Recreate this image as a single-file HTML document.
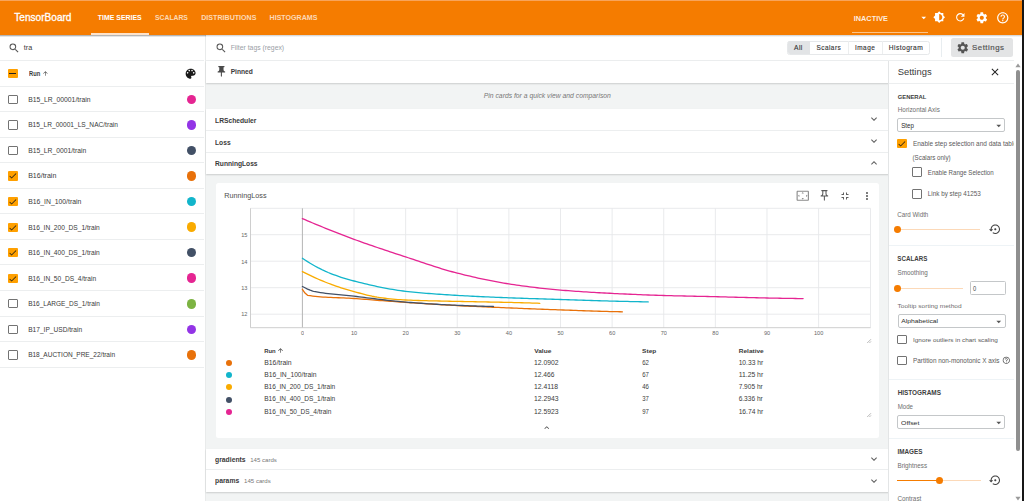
<!DOCTYPE html>
<html><head><meta charset="utf-8"><style>
*{box-sizing:border-box;margin:0;padding:0}
html,body{width:1024px;height:501px;overflow:hidden}
body{position:relative;font-family:"Liberation Sans",sans-serif;background:#fff}
.a{position:absolute}
.t{position:absolute;white-space:nowrap;line-height:12px;height:12px}
</style></head><body>
<div class="a" style="left:0.00px;top:0.00px;width:1024.00px;height:501.00px;background:#fff"></div>
<div class="a" style="left:205.50px;top:35.00px;width:683.10px;height:466.00px;background:#f2f4f4"></div>
<div class="a" style="left:204.50px;top:35.00px;width:1.50px;height:466.00px;background:#e9ebeb"></div>
<div class="a" style="left:0.00px;top:0.00px;width:1024.00px;height:34.60px;background:#f57c00"></div>
<div class="a" style="left:0.00px;top:0.00px;width:1024.00px;height:0.80px;background:#f8a45a"></div>
<div class="a" style="left:0.00px;top:34.60px;width:1024.00px;height:2.20px;background:linear-gradient(rgba(0,0,0,.22),rgba(0,0,0,0))"></div>
<div class="t" style="left:14.25px;top:12.00px;font-size:10.11px;color:#fff;font-weight:normal;transform:scaleY(1.050);transform-origin:0 9.00px;-webkit-text-stroke:0.3px #fff">TensorBoard</div>
<div class="t" style="left:97.75px;top:12.00px;font-size:6.95px;color:#fff;font-weight:bold;transform:scaleY(1.088);transform-origin:0 8.00px">TIME SERIES</div>
<div class="t" style="left:155.05px;top:12.00px;font-size:6.81px;color:rgba(255,255,255,.72);font-weight:bold;transform:scaleY(1.110);transform-origin:0 8.00px">SCALARS</div>
<div class="t" style="left:201.25px;top:12.00px;font-size:7.10px;color:rgba(255,255,255,.72);font-weight:bold;transform:scaleY(1.065);transform-origin:0 8.00px">DISTRIBUTIONS</div>
<div class="t" style="left:269.55px;top:12.00px;font-size:7.09px;color:rgba(255,255,255,.72);font-weight:bold;transform:scaleY(1.067);transform-origin:0 8.00px">HISTOGRAMS</div>
<div class="a" style="left:91.00px;top:33.00px;width:58.00px;height:1.80px;background:#fde3cc"></div>
<div class="t" style="left:853.75px;top:13.00px;font-size:7.33px;color:rgba(255,255,255,.88);font-weight:bold;transform:scaleY(1.051);transform-origin:0 8.00px">INACTIVE</div>
<div class="a" style="left:851.80px;top:31.80px;width:76.20px;height:1.20px;background:rgba(255,255,255,.55)"></div>
<svg class="a" style="left:917.75px;top:11.85px;width:11.50px;height:11.50px" viewBox="0 0 24 24"><path fill="#fff" d="M7 10l5 5 5-5z"/></svg>
<svg class="a" style="left:932.80px;top:11.25px;width:12.40px;height:12.40px" viewBox="0 0 24 24"><path fill="#fff" d="M20 15.31L23.31 12 20 8.69V4h-4.69L12 .69 8.69 4H4v4.69L.69 12 4 15.31V20h4.690L12 23.31 15.31 20H20v-4.69zM12 18V6c3.31 0 6 2.69 6 6s-2.69 6-6 6z"/></svg>
<svg class="a" style="left:954.00px;top:11.40px;width:12.60px;height:12.60px" viewBox="0 0 24 24"><path fill="#fff" d="M17.65 6.35A7.958 7.958 0 0 0 12 4c-4.42 0-7.99 3.58-7.99 8s3.57 8 7.99 8c3.73 0 6.84-2.55 7.73-6h-2.08A5.990 5.990 0 0 1 12 18c-3.31 0-6-2.69-6-6s2.69-6 6-6c1.66 0 3.140.69 4.22 1.78L13 11h7V4l-2.35 2.35z"/></svg>
<svg class="a" style="left:974.70px;top:10.65px;width:13.60px;height:13.60px" viewBox="0 0 24 24"><path fill="#fff" d="M19.14 12.94c.04-.3.06-.61.06-.94 0-.32-.02-.64-.07-.94l2.03-1.58a.49.49 0 0 0 .12-.61l-1.92-3.32a.488.488 0 0 0-.59-.22l-2.39.96c-.5-.38-1.03-.7-1.62-.94l-.36-2.54a.484.484 0 0 0-.48-.41h-3.84c-.24 0-.43.17-.47.41l-.36 2.54c-.59.24-1.13.57-1.62.94l-2.39-.96c-.22-.08-.47 0-.59.22L2.74 8.87c-.12.21-.08.47.12.61l2.030 1.58c-.05.3-.09.63-.09.94s.02.64.07.94l-2.03 1.58a.49.49 0 0 0-.12.61l1.92 3.32c.12.22.37.29.59.22l2.39-.96c.5.38 1.030.7 1.62.94l.36 2.54c.05.24.24.41.48.41h3.84c.24 0 .44-.17.47-.41l.36-2.54c.59-.24 1.13-.56 1.62-.94l2.39.96c.22.08.47 0 .59-.22l1.92-3.32c.12-.22.07-.47-.12-.61l-2.01-1.58zM12 15.6c-1.98 0-3.6-1.62-3.6-3.6s1.62-3.6 3.6-3.6 3.6 1.62 3.6 3.6-1.62 3.6-3.6 3.6z"/></svg>
<svg class="a" style="left:995.85px;top:10.80px;width:13.50px;height:13.50px" viewBox="0 0 24 24"><path fill="#fff" d="M11 18h2v-2h-2v2zm1-16C6.48 2 2 6.48 2 12s4.48 10 10 10 10-4.48 10-10S17.52 2 12 2zm0 18c-4.41 0-8-3.59-8-8s3.59-8 8-8 8 3.59 8 8-3.59 8-8 8zm0-14c-2.21 0-4 1.79-4 4h2c0-1.1.9-2 2-2s2 .9 2 2c0 2-3 1.75-3 5h2c0-2.25 3-2.5 3-5 0-2.21-1.79-4-4-4z"/></svg>
<svg class="a" style="left:8.35px;top:41.55px;width:12.30px;height:12.30px" viewBox="0 0 24 24"><path fill="#555" d="M15.5 14h-.79l-.28-.27A6.471 6.471 0 0 0 16 9.5 6.5 6.5 0 1 0 9.5 16c1.61 0 3.09-.59 4.23-1.57l.27.28v.79l5 4.99L20.49 19l-4.99-5zm-6 0C7.01 14 5 11.99 5 9.5S7.01 5 9.5 5 14 7.01 14 9.5 11.99 14 9.5 14z"/></svg>
<div class="t" style="left:23.85px;top:42.00px;font-size:7.20px;color:#3a3a3a;font-weight:normal">tra</div>
<div class="a" style="left:0.00px;top:59.90px;width:204.20px;height:1.00px;background:#eceeef"></div>
<div class="a" style="left:8.00px;top:68.70px;width:9.50px;height:9.30px;background:#f9a825;background:#ffa000;border-radius:1px"></div>
<div class="a" style="left:9.10px;top:72.70px;width:7.40px;height:1.30px;background:#212121"></div>
<div class="t" style="left:29.05px;top:68.00px;font-size:5.76px;color:#3a3a3a;font-weight:bold;transform:scaleY(1.186);transform-origin:0 8.00px">Run</div>
<svg class="a" style="left:41.60px;top:70.10px;width:6.80px;height:6.80px" viewBox="0 0 24 24"><path fill="#3a3a3a" d="M4 12l1.41 1.41L11 7.83V20h2V7.83l5.58 5.59L20 12l-8-8-8 8z"/></svg>
<svg class="a" style="left:184.05px;top:66.55px;width:13.30px;height:13.30px" viewBox="0 0 24 24"><path fill="#1a1a1a" d="M12 3c-4.97 0-9 4.03-9 9s4.03 9 9 9c.83 0 1.5-.67 1.5-1.5 0-.39-.15-.74-.39-1.01-.23-.26-.38-.61-.38-.99 0-.83.67-1.5 1.5-1.5H16c2.76 0 5-2.24 5-5 0-4.42-4.03-8-9-8zm-5.5 9c-.83 0-1.5-.67-1.5-1.5S5.67 9 6.5 9 8 9.67 8 10.5 7.33 12 6.5 12zm3-4C8.67 8 8 7.33 8 6.5S8.67 5 9.5 5s1.5.67 1.5 1.5S10.33 8 9.5 8zm5 0c-.83 0-1.5-.67-1.5-1.5S13.67 5 14.5 5s1.5.67 1.5 1.5S15.33 8 14.5 8zm3 4c-.83 0-1.5-.67-1.5-1.5S16.67 9 17.5 9s1.5.67 1.5 1.5-.67 1.5-1.5 1.5z"/></svg>
<div class="a" style="left:0.00px;top:86.00px;width:204.40px;height:1.00px;background:#eceeef"></div>
<div class="a" style="left:8.00px;top:94.75px;width:9.50px;height:9.30px;border:1.15px solid #737373;border-radius:1px"></div>
<div class="t" style="left:28.15px;top:94.00px;font-size:6.80px;color:#3a3a3a;font-weight:normal;transform:scaleY(1.026);transform-origin:0 8.00px">B15_LR_00001/train</div>
<div class="a" style="left:186.70px;top:94.60px;width:9.60px;height:9.60px;background:#e52592;border-radius:50%"></div>
<div class="a" style="left:0.00px;top:111.00px;width:204.40px;height:1.00px;background:#eceeef"></div>
<div class="a" style="left:8.00px;top:120.30px;width:9.50px;height:9.30px;border:1.15px solid #737373;border-radius:1px"></div>
<div class="t" style="left:28.15px;top:119.00px;font-size:6.60px;color:#3a3a3a;font-weight:normal;transform:scaleY(1.057);transform-origin:0 8.00px">B15_LR_00001_LS_NAC/train</div>
<div class="a" style="left:186.70px;top:120.15px;width:9.60px;height:9.60px;background:#9334e6;border-radius:50%"></div>
<div class="a" style="left:0.00px;top:136.58px;width:204.40px;height:1.00px;background:#eceeef"></div>
<div class="a" style="left:8.00px;top:145.85px;width:9.50px;height:9.30px;border:1.15px solid #737373;border-radius:1px"></div>
<div class="t" style="left:28.15px;top:145.00px;font-size:6.74px;color:#3a3a3a;font-weight:normal;transform:scaleY(1.035);transform-origin:0 8.00px">B15_LR_0001/train</div>
<div class="a" style="left:186.70px;top:145.70px;width:9.60px;height:9.60px;background:#425066;border-radius:50%"></div>
<div class="a" style="left:0.00px;top:162.16px;width:204.40px;height:1.00px;background:#eceeef"></div>
<div class="a" style="left:8.00px;top:171.40px;width:9.50px;height:9.30px;background:#ffa000;border-radius:1px"></div>
<svg class="a" style="left:7.95px;top:171.45px;width:9.60px;height:9.60px" viewBox="0 0 24 24"><path fill="#1a1a1a" d="M9 16.17L4.830 12l-1.42 1.41L9 19 21 7l-1.41-1.41z"/></svg>
<div class="t" style="left:28.15px;top:170.00px;font-size:7.05px;color:#3a3a3a;font-weight:normal">B16/train</div>
<div class="a" style="left:186.70px;top:171.25px;width:9.60px;height:9.60px;background:#e8710a;border-radius:50%"></div>
<div class="a" style="left:0.00px;top:187.74px;width:204.40px;height:1.00px;background:#eceeef"></div>
<div class="a" style="left:8.00px;top:196.95px;width:9.50px;height:9.30px;background:#ffa000;border-radius:1px"></div>
<svg class="a" style="left:7.95px;top:197.00px;width:9.60px;height:9.60px" viewBox="0 0 24 24"><path fill="#1a1a1a" d="M9 16.17L4.830 12l-1.42 1.41L9 19 21 7l-1.41-1.41z"/></svg>
<div class="t" style="left:28.15px;top:196.00px;font-size:6.84px;color:#3a3a3a;font-weight:normal;transform:scaleY(1.021);transform-origin:0 8.00px">B16_IN_100/train</div>
<div class="a" style="left:186.70px;top:196.80px;width:9.60px;height:9.60px;background:#12b5cb;border-radius:50%"></div>
<div class="a" style="left:0.00px;top:213.32px;width:204.40px;height:1.00px;background:#eceeef"></div>
<div class="a" style="left:8.00px;top:222.50px;width:9.50px;height:9.30px;background:#ffa000;border-radius:1px"></div>
<svg class="a" style="left:7.95px;top:222.55px;width:9.60px;height:9.60px" viewBox="0 0 24 24"><path fill="#1a1a1a" d="M9 16.17L4.830 12l-1.42 1.41L9 19 21 7l-1.41-1.41z"/></svg>
<div class="t" style="left:28.15px;top:222.00px;font-size:6.62px;color:#3a3a3a;font-weight:normal;transform:scaleY(1.053);transform-origin:0 8.00px">B16_IN_200_DS_1/train</div>
<div class="a" style="left:186.70px;top:222.35px;width:9.60px;height:9.60px;background:#f9ab00;border-radius:50%"></div>
<div class="a" style="left:0.00px;top:238.90px;width:204.40px;height:1.00px;background:#eceeef"></div>
<div class="a" style="left:8.00px;top:248.05px;width:9.50px;height:9.30px;background:#ffa000;border-radius:1px"></div>
<svg class="a" style="left:7.95px;top:248.10px;width:9.60px;height:9.60px" viewBox="0 0 24 24"><path fill="#1a1a1a" d="M9 16.17L4.830 12l-1.42 1.41L9 19 21 7l-1.41-1.41z"/></svg>
<div class="t" style="left:28.15px;top:247.00px;font-size:6.62px;color:#3a3a3a;font-weight:normal;transform:scaleY(1.053);transform-origin:0 8.00px">B16_IN_400_DS_1/train</div>
<div class="a" style="left:186.70px;top:247.90px;width:9.60px;height:9.60px;background:#425066;border-radius:50%"></div>
<div class="a" style="left:0.00px;top:264.48px;width:204.40px;height:1.00px;background:#eceeef"></div>
<div class="a" style="left:8.00px;top:273.60px;width:9.50px;height:9.30px;background:#ffa000;border-radius:1px"></div>
<svg class="a" style="left:7.95px;top:273.65px;width:9.60px;height:9.60px" viewBox="0 0 24 24"><path fill="#1a1a1a" d="M9 16.17L4.830 12l-1.42 1.41L9 19 21 7l-1.41-1.41z"/></svg>
<div class="t" style="left:28.15px;top:273.00px;font-size:6.62px;color:#3a3a3a;font-weight:normal;transform:scaleY(1.054);transform-origin:0 8.00px">B16_IN_50_DS_4/train</div>
<div class="a" style="left:186.70px;top:273.45px;width:9.60px;height:9.60px;background:#e52592;border-radius:50%"></div>
<div class="a" style="left:0.00px;top:290.06px;width:204.40px;height:1.00px;background:#eceeef"></div>
<div class="a" style="left:8.00px;top:299.15px;width:9.50px;height:9.30px;border:1.15px solid #737373;border-radius:1px"></div>
<div class="t" style="left:28.15px;top:298.00px;font-size:6.52px;color:#3a3a3a;font-weight:normal;transform:scaleY(1.069);transform-origin:0 8.00px">B16_LARGE_DS_1/train</div>
<div class="a" style="left:186.70px;top:299.00px;width:9.60px;height:9.60px;background:#7cb342;border-radius:50%"></div>
<div class="a" style="left:0.00px;top:315.64px;width:204.40px;height:1.00px;background:#eceeef"></div>
<div class="a" style="left:8.00px;top:324.70px;width:9.50px;height:9.30px;border:1.15px solid #737373;border-radius:1px"></div>
<div class="t" style="left:28.15px;top:324.00px;font-size:6.61px;color:#3a3a3a;font-weight:normal;transform:scaleY(1.056);transform-origin:0 8.00px">B17_IP_USD/train</div>
<div class="a" style="left:186.70px;top:324.55px;width:9.60px;height:9.60px;background:#9334e6;border-radius:50%"></div>
<div class="a" style="left:0.00px;top:341.22px;width:204.40px;height:1.00px;background:#eceeef"></div>
<div class="a" style="left:8.00px;top:350.25px;width:9.50px;height:9.30px;border:1.15px solid #737373;border-radius:1px"></div>
<div class="t" style="left:28.15px;top:349.00px;font-size:6.53px;color:#3a3a3a;font-weight:normal;transform:scaleY(1.068);transform-origin:0 8.00px">B18_AUCTION_PRE_22/train</div>
<div class="a" style="left:186.70px;top:350.10px;width:9.60px;height:9.60px;background:#e8710a;border-radius:50%"></div>
<div class="a" style="left:0.00px;top:366.80px;width:204.40px;height:1.00px;background:#eceeef"></div>
<div class="a" style="left:205.80px;top:35.00px;width:816.20px;height:25.00px;background:#fff"></div>
<div class="a" style="left:205.80px;top:59.60px;width:808.40px;height:1.00px;background:#eceeef"></div>
<svg class="a" style="left:214.85px;top:41.65px;width:12.30px;height:12.30px" viewBox="0 0 24 24"><path fill="#555" d="M15.5 14h-.79l-.28-.27A6.471 6.471 0 0 0 16 9.5 6.5 6.5 0 1 0 9.5 16c1.61 0 3.09-.59 4.23-1.57l.27.28v.79l5 4.99L20.49 19l-4.99-5zm-6 0C7.01 14 5 11.99 5 9.5S7.01 5 9.5 5 14 7.01 14 9.5 11.99 14 9.5 14z"/></svg>
<div class="t" style="left:230.65px;top:42.00px;font-size:6.83px;color:#9aa0a6;font-weight:normal;transform:scaleY(0.958);transform-origin:0 8.00px">Filter tags (regex)</div>
<div class="a" style="left:787.20px;top:40.70px;width:142.90px;height:13.90px;border:0.8px solid #e6e8ea;border-radius:2.5px;background:#fff"></div>
<div class="a" style="left:787.60px;top:41.10px;width:22.50px;height:13.10px;background:#e2e4e6;border-radius:2px 0 0 2px"></div>
<div class="a" style="left:848.10px;top:41.10px;width:0.80px;height:13.10px;background:#eceeef"></div>
<div class="a" style="left:882.10px;top:41.10px;width:0.80px;height:13.10px;background:#eceeef"></div>
<div class="t" style="left:794.05px;top:42.00px;font-size:6.66px;color:#333;font-weight:normal;letter-spacing:0.45px;transform:scaleY(1.026);transform-origin:0 8.00px;-webkit-text-stroke:0.12px #333">All</div>
<div class="t" style="left:816.55px;top:42.00px;font-size:6.45px;color:#333;font-weight:normal;letter-spacing:0.45px;transform:scaleY(1.060);transform-origin:0 8.00px;-webkit-text-stroke:0.12px #333">Scalars</div>
<div class="t" style="left:855.05px;top:42.00px;font-size:6.44px;color:#333;font-weight:normal;letter-spacing:0.45px;transform:scaleY(1.061);transform-origin:0 8.00px;-webkit-text-stroke:0.12px #333">Image</div>
<div class="t" style="left:888.75px;top:42.00px;font-size:6.67px;color:#333;font-weight:normal;letter-spacing:0.45px;transform:scaleY(1.024);transform-origin:0 8.00px;-webkit-text-stroke:0.12px #333">Histogram</div>
<div class="a" style="left:941.10px;top:37.90px;width:0.80px;height:18.70px;background:#e8edf0"></div>
<div class="a" style="left:950.90px;top:37.90px;width:62.10px;height:18.90px;background:#e3e4e5;border-radius:2.5px"></div>
<svg class="a" style="left:956.40px;top:40.65px;width:13.50px;height:13.50px" viewBox="0 0 24 24"><path fill="#555" d="M19.14 12.94c.04-.3.06-.61.06-.94 0-.32-.02-.64-.07-.94l2.03-1.58a.49.49 0 0 0 .12-.61l-1.92-3.32a.488.488 0 0 0-.59-.22l-2.39.96c-.5-.38-1.03-.7-1.62-.94l-.36-2.54a.484.484 0 0 0-.48-.41h-3.84c-.24 0-.43.17-.47.41l-.36 2.54c-.59.24-1.13.57-1.62.94l-2.39-.96c-.22-.08-.47 0-.59.22L2.74 8.87c-.12.21-.08.47.12.61l2.030 1.58c-.05.3-.09.63-.09.94s.02.64.07.94l-2.03 1.58a.49.49 0 0 0-.12.61l1.92 3.32c.12.22.37.29.59.22l2.39-.96c.5.38 1.030.7 1.62.94l.36 2.54c.05.24.24.41.48.41h3.84c.24 0 .44-.17.47-.41l.36-2.54c.59-.24 1.13-.56 1.62-.94l2.39.96c.22.08.47 0 .59-.22l1.92-3.32c.12-.22.07-.47-.12-.61l-2.01-1.58zM12 15.6c-1.98 0-3.6-1.62-3.6-3.6s1.62-3.6 3.6-3.6 3.6 1.62 3.6 3.6-1.62 3.6-3.6 3.6z"/></svg>
<div class="t" style="left:972.05px;top:42.00px;font-size:7.86px;color:#555;font-weight:normal;letter-spacing:0.5px;transform:scaleY(0.962);transform-origin:0 8.00px;-webkit-text-stroke:0.2px #555">Settings</div>
<div class="a" style="left:205.80px;top:60.60px;width:682.80px;height:22.80px;background:#fff;box-shadow:0 1px 1.5px rgba(0,0,0,.16)"></div>
<svg class="a" style="left:214.90px;top:64.90px;width:12.80px;height:12.80px" viewBox="0 0 24 24"><path fill="#4a4a4a" d="M16 9V4h1c.55 0 1-.45 1-1s-.45-1-1-1H7c-.55 0-1 .45-1 1s.45 1 1 1h1v5c0 1.66-1.34 3-3 3v2h5.97v7l1 1 1-1v-7H19v-2c-1.66 0-3-1.34-3-3z"/></svg>
<div class="t" style="left:230.65px;top:66.00px;font-size:6.66px;color:#3a3a3a;font-weight:bold;transform:scaleY(1.069);transform-origin:0 8.00px">Pinned</div>
<div class="t" style="left:483.80px;top:90.00px;font-size:6.79px;color:#777;font-weight:normal;transform:scaleY(0.963);transform-origin:0 8.00px;font-style:italic">Pin cards for a quick view and comparison</div>
<div class="a" style="left:205.80px;top:108.60px;width:682.80px;height:65.40px;background:#fff;box-shadow:0 1px 1.5px rgba(0,0,0,.16)"></div>
<div class="t" style="left:215.05px;top:115.00px;font-size:6.71px;color:#3a3a3a;font-weight:bold;transform:scaleY(1.039);transform-origin:0 8.00px">LRScheduler</div>
<svg class="a" style="left:867.60px;top:113.40px;width:12.00px;height:12.00px" viewBox="0 0 24 24"><path fill="#5f5f5f" d="M16.59 8.59L12 13.17 7.41 8.59 6 10l6 6 6-6z"/></svg>
<div class="t" style="left:215.05px;top:137.00px;font-size:6.68px;color:#3a3a3a;font-weight:bold;transform:scaleY(1.087);transform-origin:0 8.00px">Loss</div>
<svg class="a" style="left:867.60px;top:135.10px;width:12.00px;height:12.00px" viewBox="0 0 24 24"><path fill="#5f5f5f" d="M16.59 8.59L12 13.17 7.41 8.59 6 10l6 6 6-6z"/></svg>
<div class="t" style="left:215.05px;top:158.00px;font-size:6.67px;color:#3a3a3a;font-weight:bold;transform:scaleY(1.090);transform-origin:0 8.00px">RunningLoss</div>
<svg class="a" style="left:867.60px;top:156.70px;width:12.00px;height:12.00px" viewBox="0 0 24 24"><path fill="#5f5f5f" d="M12 8l-6 6 1.41 1.41L12 10.83l4.59 4.58L18 14z"/></svg>
<div class="a" style="left:205.80px;top:130.10px;width:682.80px;height:1.00px;background:#eceeef"></div>
<div class="a" style="left:205.80px;top:151.70px;width:682.80px;height:1.00px;background:#eceeef"></div>
<div class="a" style="left:216.00px;top:183.20px;width:662.60px;height:254.90px;background:#fff;border-radius:2.5px"></div>
<div class="t" style="left:224.25px;top:190.00px;font-size:7.26px;color:#4d4d4d;font-weight:normal;transform:scaleY(0.921);transform-origin:0 8.00px">RunningLoss</div>
<svg class="a" style="left:795.95px;top:188.95px;width:13.50px;height:13.50px" viewBox="0 0 24 24"><path fill="#8a8a8a" d="M12.01 5.5L10 8h4l-1.99-2.5zM18 10v4l2.5-1.99L18 10zM6 10l-2.5 2.01L6 14v-4zm8 6h-4l2.01 2.5L14 16zm7-13H3c-1.1 0-2 .9-2 2v14c0 1.1.9 2 2 2h18c1.1 0 2-.9 2-2V5c0-1.1-.9-2-2-2zm0 16.01H3V4.99h18v14.02z"/></svg>
<svg class="a" style="left:817.60px;top:189.40px;width:12.80px;height:12.80px" viewBox="0 0 24 24"><path fill="#5a5a5a" d="M14 4v5c0 1.12.37 2.16 1 3H9c.65-.86 1-1.9 1-3V4h4m3-2H7c-.55 0-1 .45-1 1s.45 1 1 1h1v5c0 1.66-1.34 3-3 3v2h5.97v7l1 1 1-1v-7H19v-2c-1.66 0-3-1.34-3-3V4h1c.55 0 1-.45 1-1s-.45-1-1-1z"/></svg>
<svg class="a" style="left:839.20px;top:189.60px;width:12.00px;height:12.00px" viewBox="0 0 24 24"><path fill="#616161" d="M5 16h3v3h2v-5H5v2zm3-8H5v2h5V5H8v3zm6 11h2v-3h3v-2h-5v5zm2-11V5h-2v5h5V8h-3z"/></svg>
<svg class="a" style="left:860.50px;top:189.60px;width:12.00px;height:12.00px" viewBox="0 0 24 24"><path fill="#616161" d="M12 8c1.1 0 2-.9 2-2s-.9-2-2-2-2 .9-2 2 .9 2 2 2zm0 2c-1.1 0-2 .9-2 2s.9 2 2 2 2-.9 2-2-.9-2-2-2zm0 6c-1.1 0-2 .9-2 2s.9 2 2 2 2-.9 2-2-.9-2-2-2z"/></svg>
<svg class="a" style="left:0;top:0;width:1024px;height:501px" viewBox="0 0 1024 501"><line x1="250.5" y1="314.20" x2="870.5" y2="314.20" stroke="#e6e8ea" stroke-width="0.9"/><line x1="250.5" y1="287.70" x2="870.5" y2="287.70" stroke="#e6e8ea" stroke-width="0.9"/><line x1="250.5" y1="261.20" x2="870.5" y2="261.20" stroke="#e6e8ea" stroke-width="0.9"/><line x1="250.5" y1="234.70" x2="870.5" y2="234.70" stroke="#e6e8ea" stroke-width="0.9"/><line x1="250.5" y1="208.3" x2="870.5" y2="208.3" stroke="#e6e8ea" stroke-width="0.9"/><line x1="354.02" y1="208.3" x2="354.02" y2="327.7" stroke="#e6e8ea" stroke-width="0.9"/><line x1="405.64" y1="208.3" x2="405.64" y2="327.7" stroke="#e6e8ea" stroke-width="0.9"/><line x1="457.26" y1="208.3" x2="457.26" y2="327.7" stroke="#e6e8ea" stroke-width="0.9"/><line x1="508.88" y1="208.3" x2="508.88" y2="327.7" stroke="#e6e8ea" stroke-width="0.9"/><line x1="560.50" y1="208.3" x2="560.50" y2="327.7" stroke="#e6e8ea" stroke-width="0.9"/><line x1="612.12" y1="208.3" x2="612.12" y2="327.7" stroke="#e6e8ea" stroke-width="0.9"/><line x1="663.74" y1="208.3" x2="663.74" y2="327.7" stroke="#e6e8ea" stroke-width="0.9"/><line x1="715.36" y1="208.3" x2="715.36" y2="327.7" stroke="#e6e8ea" stroke-width="0.9"/><line x1="766.98" y1="208.3" x2="766.98" y2="327.7" stroke="#e6e8ea" stroke-width="0.9"/><line x1="818.60" y1="208.3" x2="818.60" y2="327.7" stroke="#e6e8ea" stroke-width="0.9"/><line x1="870.5" y1="208.3" x2="870.5" y2="327.7" stroke="#e6e8ea" stroke-width="0.9"/><line x1="302.40" y1="208.3" x2="302.40" y2="327.7" stroke="#b5b5b5" stroke-width="1"/><line x1="250.5" y1="208.3" x2="250.5" y2="327.7" stroke="#c8c8c8" stroke-width="0.9"/><line x1="250.5" y1="327.7" x2="870.5" y2="327.7" stroke="#c8c8c8" stroke-width="0.9"/><polyline fill="none" stroke="#e52592" stroke-width="1.3" stroke-linejoin="round" stroke-linecap="round" points="302.40,218.60 304.98,219.71 307.56,220.81 310.14,221.91 312.72,222.99 315.30,224.07 317.89,225.14 320.47,226.21 323.05,227.26 325.63,228.31 328.21,229.35 330.79,230.39 333.37,231.41 335.95,232.43 338.53,233.43 341.11,234.43 343.70,235.42 346.28,236.41 348.86,237.38 351.44,238.34 354.02,239.30 356.60,240.25 359.18,241.18 361.76,242.11 364.34,243.03 366.92,243.93 369.51,244.84 372.09,245.73 374.67,246.62 377.25,247.50 379.83,248.37 382.41,249.24 384.99,250.10 387.57,250.96 390.15,251.82 392.73,252.67 395.32,253.52 397.90,254.37 400.48,255.21 403.06,256.06 405.64,256.90 408.22,257.75 410.80,258.60 413.38,259.46 415.96,260.33 418.54,261.20 421.13,262.06 423.71,262.93 426.29,263.79 428.87,264.64 431.45,265.49 434.03,266.33 436.61,267.15 439.19,267.96 441.77,268.76 444.35,269.54 446.94,270.30 449.52,271.03 452.10,271.75 454.68,272.44 457.26,273.10 459.84,273.74 462.42,274.38 465.00,275.01 467.58,275.63 470.16,276.24 472.75,276.84 475.33,277.43 477.91,278.01 480.49,278.58 483.07,279.14 485.65,279.68 488.23,280.21 490.81,280.72 493.39,281.23 495.97,281.71 498.56,282.18 501.14,282.64 503.72,283.08 506.30,283.50 508.88,283.90 511.46,284.29 514.04,284.67 516.62,285.05 519.20,285.42 521.78,285.77 524.37,286.13 526.95,286.47 529.53,286.80 532.11,287.13 534.69,287.45 537.27,287.75 539.85,288.05 542.43,288.34 545.01,288.62 547.60,288.89 550.18,289.16 552.76,289.41 555.34,289.65 557.92,289.88 560.50,290.10 563.08,290.31 565.66,290.52 568.24,290.72 570.82,290.91 573.40,291.10 575.99,291.28 578.57,291.46 581.15,291.64 583.73,291.80 586.31,291.97 588.89,292.13 591.47,292.28 594.05,292.43 596.63,292.58 599.21,292.73 601.80,292.87 604.38,293.00 606.96,293.14 609.54,293.27 612.12,293.40 614.70,293.53 617.28,293.65 619.86,293.78 622.44,293.90 625.02,294.02 627.61,294.13 630.19,294.25 632.77,294.36 635.35,294.47 637.93,294.58 640.51,294.68 643.09,294.79 645.67,294.89 648.25,294.98 650.84,295.08 653.42,295.17 656.00,295.26 658.58,295.34 661.16,295.42 663.74,295.50 666.32,295.57 668.90,295.65 671.48,295.71 674.06,295.78 676.64,295.84 679.23,295.91 681.81,295.96 684.39,296.02 686.97,296.08 689.55,296.13 692.13,296.19 694.71,296.24 697.29,296.30 699.87,296.35 702.45,296.41 705.04,296.46 707.62,296.52 710.20,296.58 712.78,296.64 715.36,296.70 717.94,296.76 720.52,296.83 723.10,296.89 725.68,296.96 728.26,297.03 730.85,297.10 733.43,297.17 736.01,297.24 738.59,297.31 741.17,297.38 743.75,297.45 746.33,297.52 748.91,297.58 751.49,297.65 754.08,297.71 756.66,297.77 759.24,297.83 761.82,297.89 764.40,297.95 766.98,298.00 769.56,298.05 772.14,298.10 774.72,298.15 777.30,298.20 779.88,298.24 782.47,298.29 785.05,298.33 787.63,298.37 790.21,298.41 792.79,298.45 795.37,298.49 797.95,298.53 800.53,298.57 803.11,298.60"/><polyline fill="none" stroke="#12b5cb" stroke-width="1.3" stroke-linejoin="round" stroke-linecap="round" points="302.40,258.30 304.98,259.98 307.56,261.62 310.14,263.20 312.72,264.73 315.30,266.20 317.89,267.61 320.47,268.94 323.05,270.21 325.63,271.39 328.21,272.50 330.79,273.54 333.37,274.53 335.95,275.48 338.53,276.39 341.11,277.26 343.70,278.08 346.28,278.86 348.86,279.61 351.44,280.32 354.02,281.00 356.60,281.66 359.18,282.30 361.76,282.94 364.34,283.57 366.92,284.19 369.51,284.79 372.09,285.39 374.67,285.96 377.25,286.52 379.83,287.07 382.41,287.59 384.99,288.10 387.57,288.58 390.15,289.04 392.73,289.48 395.32,289.90 397.90,290.29 400.48,290.66 403.06,290.99 405.64,291.30 408.22,291.59 410.80,291.86 413.38,292.13 415.96,292.38 418.54,292.62 421.13,292.86 423.71,293.08 426.29,293.30 428.87,293.50 431.45,293.70 434.03,293.90 436.61,294.08 439.19,294.26 441.77,294.44 444.35,294.61 446.94,294.77 449.52,294.93 452.10,295.09 454.68,295.25 457.26,295.40 459.84,295.55 462.42,295.69 465.00,295.84 467.58,295.97 470.16,296.11 472.75,296.24 475.33,296.37 477.91,296.49 480.49,296.61 483.07,296.73 485.65,296.85 488.23,296.96 490.81,297.07 493.39,297.18 495.97,297.29 498.56,297.39 501.14,297.50 503.72,297.60 506.30,297.70 508.88,297.80 511.46,297.90 514.04,297.99 516.62,298.09 519.20,298.18 521.78,298.27 524.37,298.36 526.95,298.44 529.53,298.53 532.11,298.61 534.69,298.69 537.27,298.77 539.85,298.86 542.43,298.94 545.01,299.02 547.60,299.10 550.18,299.18 552.76,299.26 555.34,299.34 557.92,299.42 560.50,299.50 563.08,299.58 565.66,299.67 568.24,299.75 570.82,299.84 573.40,299.92 575.99,300.00 578.57,300.09 581.15,300.17 583.73,300.26 586.31,300.34 588.89,300.42 591.47,300.50 594.05,300.59 596.63,300.66 599.21,300.74 601.80,300.82 604.38,300.89 606.96,300.96 609.54,301.03 612.12,301.10 614.70,301.17 617.28,301.23 619.86,301.29 622.44,301.35 625.02,301.41 627.61,301.47 630.19,301.53 632.77,301.59 635.35,301.64 637.93,301.70 640.51,301.75 643.09,301.80 645.67,301.85 648.25,301.90"/><polyline fill="none" stroke="#f9ab00" stroke-width="1.3" stroke-linejoin="round" stroke-linecap="round" points="302.40,271.60 304.98,272.91 307.56,274.19 310.14,275.44 312.72,276.66 315.30,277.84 317.89,278.99 320.47,280.10 323.05,281.19 325.63,282.23 328.21,283.24 330.79,284.22 331.82,284.60 333.37,285.16 335.95,286.07 338.53,286.95 341.11,287.79 343.70,288.61 346.28,289.40 348.86,290.16 351.44,290.89 354.02,291.60 356.60,292.30 359.18,293.00 361.76,293.70 364.34,294.38 366.92,295.04 369.51,295.66 372.09,296.24 374.67,296.76 377.25,297.22 379.83,297.60 382.41,297.93 384.99,298.25 387.57,298.55 390.15,298.83 392.73,299.08 395.32,299.32 397.90,299.53 400.48,299.71 403.06,299.87 405.64,300.00 408.22,300.11 410.80,300.22 413.38,300.31 415.96,300.40 418.54,300.49 421.13,300.57 423.71,300.64 426.29,300.71 428.87,300.78 431.45,300.84 434.03,300.90 436.61,300.96 439.19,301.02 441.77,301.07 444.35,301.13 446.94,301.18 449.52,301.23 452.10,301.29 454.68,301.34 457.26,301.40 459.84,301.46 462.42,301.51 465.00,301.56 467.58,301.61 470.16,301.66 472.75,301.71 475.33,301.76 477.91,301.80 480.49,301.85 483.07,301.89 485.65,301.94 488.23,301.98 490.81,302.03 493.39,302.08 495.97,302.13 498.56,302.18 501.14,302.23 503.72,302.28 506.30,302.34 508.88,302.40 511.46,302.46 514.04,302.53 516.62,302.60 519.20,302.67 521.78,302.74 524.37,302.81 526.95,302.89 529.53,302.97 532.11,303.05 534.69,303.13 537.27,303.22 539.85,303.30"/><polyline fill="none" stroke="#e8710a" stroke-width="1.3" stroke-linejoin="round" stroke-linecap="round" points="302.40,289.30 304.98,293.01 307.56,295.30 310.14,295.71 312.72,296.07 315.30,296.38 317.89,296.64 320.47,296.86 323.05,297.05 325.63,297.22 328.21,297.35 330.79,297.47 333.37,297.58 335.95,297.67 338.53,297.76 341.11,297.85 343.70,297.95 346.28,298.06 348.86,298.18 351.44,298.33 354.02,298.50 356.60,298.69 359.18,298.88 361.76,299.07 364.34,299.27 366.92,299.47 369.51,299.67 372.09,299.87 374.67,300.07 377.25,300.27 379.83,300.48 382.41,300.68 384.99,300.88 387.57,301.08 390.15,301.27 392.73,301.47 395.32,301.66 397.90,301.85 400.48,302.04 403.06,302.22 405.64,302.40 408.22,302.58 410.80,302.75 413.38,302.92 415.96,303.10 418.54,303.27 421.13,303.44 423.71,303.61 426.29,303.78 428.87,303.94 431.45,304.10 434.03,304.27 436.61,304.43 439.19,304.58 441.77,304.74 444.35,304.89 446.94,305.04 449.52,305.18 452.10,305.33 454.68,305.46 457.26,305.60 459.84,305.73 462.42,305.86 465.00,305.99 467.58,306.11 470.16,306.24 472.75,306.36 475.33,306.47 477.91,306.59 480.49,306.70 483.07,306.82 485.65,306.93 488.23,307.04 490.81,307.15 493.39,307.26 495.97,307.37 498.56,307.47 501.14,307.58 503.72,307.69 506.30,307.79 508.88,307.90 511.46,308.01 514.04,308.11 516.62,308.22 519.20,308.32 521.78,308.43 524.37,308.53 526.95,308.63 529.53,308.74 532.11,308.84 534.69,308.94 537.27,309.04 539.85,309.14 542.43,309.24 545.01,309.33 547.60,309.43 550.18,309.53 552.76,309.62 555.34,309.71 557.92,309.81 560.50,309.90 563.08,309.99 565.66,310.09 568.24,310.18 570.82,310.27 573.40,310.37 575.99,310.46 578.57,310.56 581.15,310.65 583.73,310.74 586.31,310.83 588.89,310.92 591.47,311.01 594.05,311.09 596.63,311.17 599.21,311.25 601.80,311.33 604.38,311.40 606.96,311.47 609.54,311.54 612.12,311.60 614.70,311.66 617.28,311.71 619.86,311.76 622.44,311.80"/><polyline fill="none" stroke="#425066" stroke-width="1.3" stroke-linejoin="round" stroke-linecap="round" points="302.40,286.50 304.98,287.79 307.56,289.05 310.14,290.18 312.72,291.05 313.76,291.30 315.30,291.62 317.89,292.10 320.47,292.53 323.05,292.93 325.63,293.28 328.21,293.60 330.79,293.89 333.37,294.16 335.95,294.42 338.53,294.66 341.11,294.90 343.70,295.14 346.28,295.38 348.86,295.64 351.44,295.91 354.02,296.20 356.60,296.51 359.18,296.82 361.76,297.14 364.34,297.46 366.92,297.78 369.51,298.11 372.09,298.43 374.67,298.76 377.25,299.08 379.83,299.39 382.41,299.70 384.99,300.01 387.57,300.31 390.15,300.60 392.73,300.88 395.32,301.15 397.90,301.41 400.48,301.65 403.06,301.88 405.64,302.10 408.22,302.31 410.80,302.51 413.38,302.70 415.96,302.89 418.54,303.08 421.13,303.26 423.71,303.44 426.29,303.61 428.87,303.78 431.45,303.94 434.03,304.10 436.61,304.26 439.19,304.40 441.77,304.55 444.35,304.69 446.94,304.82 449.52,304.95 452.10,305.07 454.68,305.19 457.26,305.30 459.84,305.41 462.42,305.51 465.00,305.62 467.58,305.72 470.16,305.81 472.75,305.91 475.33,306.00 477.91,306.08 480.49,306.16 483.07,306.24 485.65,306.31 488.23,306.38 490.81,306.44 493.39,306.50"/></svg>
<div class="t" style="left:241.22px;top:308.00px;font-size:5.60px;color:#666;font-weight:normal;transform:scaleY(1.050);transform-origin:0 8.00px">12</div>
<div class="t" style="left:241.22px;top:282.00px;font-size:5.60px;color:#666;font-weight:normal;transform:scaleY(1.050);transform-origin:0 8.00px">13</div>
<div class="t" style="left:241.22px;top:256.00px;font-size:5.60px;color:#666;font-weight:normal;transform:scaleY(1.050);transform-origin:0 8.00px">14</div>
<div class="t" style="left:241.22px;top:229.00px;font-size:5.60px;color:#666;font-weight:normal;transform:scaleY(1.050);transform-origin:0 8.00px">15</div>
<div class="t" style="left:300.89px;top:327.00px;font-size:5.60px;color:#666;font-weight:normal;transform:scaleY(1.050);transform-origin:0 8.00px">0</div>
<div class="t" style="left:350.96px;top:327.00px;font-size:5.60px;color:#666;font-weight:normal;transform:scaleY(1.050);transform-origin:0 8.00px">10</div>
<div class="t" style="left:402.58px;top:327.00px;font-size:5.60px;color:#666;font-weight:normal;transform:scaleY(1.050);transform-origin:0 8.00px">20</div>
<div class="t" style="left:454.20px;top:327.00px;font-size:5.60px;color:#666;font-weight:normal;transform:scaleY(1.050);transform-origin:0 8.00px">30</div>
<div class="t" style="left:505.82px;top:327.00px;font-size:5.60px;color:#666;font-weight:normal;transform:scaleY(1.050);transform-origin:0 8.00px">40</div>
<div class="t" style="left:557.44px;top:327.00px;font-size:5.60px;color:#666;font-weight:normal;transform:scaleY(1.050);transform-origin:0 8.00px">50</div>
<div class="t" style="left:609.06px;top:327.00px;font-size:5.60px;color:#666;font-weight:normal;transform:scaleY(1.050);transform-origin:0 8.00px">60</div>
<div class="t" style="left:660.68px;top:327.00px;font-size:5.60px;color:#666;font-weight:normal;transform:scaleY(1.050);transform-origin:0 8.00px">70</div>
<div class="t" style="left:712.30px;top:327.00px;font-size:5.60px;color:#666;font-weight:normal;transform:scaleY(1.050);transform-origin:0 8.00px">80</div>
<div class="t" style="left:763.92px;top:327.00px;font-size:5.60px;color:#666;font-weight:normal;transform:scaleY(1.050);transform-origin:0 8.00px">90</div>
<div class="t" style="left:813.98px;top:327.00px;font-size:5.60px;color:#666;font-weight:normal;transform:scaleY(1.050);transform-origin:0 8.00px">100</div>
<svg class="a" style="left:866px;top:338.10px;width:6px;height:6px" viewBox="0 0 6 6"><path d="M5 1.2 L1.2 5 M5 3.4 L3.4 5" stroke="#a8a8a8" stroke-width="0.8"/></svg>
<svg class="a" style="left:866px;top:412.20px;width:6px;height:6px" viewBox="0 0 6 6"><path d="M5 1.2 L1.2 5 M5 3.4 L3.4 5" stroke="#a8a8a8" stroke-width="0.8"/></svg>
<div class="t" style="left:264.25px;top:345.00px;font-size:5.92px;color:#3a3a3a;font-weight:bold">Run</div>
<svg class="a" style="left:277.10px;top:347.10px;width:7.00px;height:7.00px" viewBox="0 0 24 24"><path fill="#333" d="M4 12l1.41 1.41L11 7.83V20h2V7.83l5.58 5.59L20 12l-8-8-8 8z"/></svg>
<div class="t" style="left:534.15px;top:345.00px;font-size:6.58px;color:#3a3a3a;font-weight:bold;transform:scaleY(0.927);transform-origin:0 8.00px">Value</div>
<div class="t" style="left:642.05px;top:345.00px;font-size:6.60px;color:#3a3a3a;font-weight:bold;transform:scaleY(0.925);transform-origin:0 8.00px">Step</div>
<div class="t" style="left:738.75px;top:345.00px;font-size:6.52px;color:#3a3a3a;font-weight:bold;transform:scaleY(0.937);transform-origin:0 8.00px">Relative</div>
<div class="a" style="left:226.30px;top:359.90px;width:6.20px;height:6.20px;background:#e8710a;border-radius:50%"></div>
<div class="t" style="left:264.25px;top:357.00px;font-size:6.85px;color:#3a3a3a;font-weight:normal;transform:scaleY(0.934);transform-origin:0 8.00px">B16/train</div>
<div class="t" style="left:534.05px;top:357.00px;font-size:6.81px;color:#3a3a3a;font-weight:normal;transform:scaleY(0.940);transform-origin:0 8.00px">12.0902</div>
<div class="t" style="left:642.25px;top:357.00px;font-size:6.02px;color:#3a3a3a;font-weight:normal;transform:scaleY(1.062);transform-origin:0 8.00px">62</div>
<div class="t" style="left:738.65px;top:357.00px;font-size:6.70px;color:#3a3a3a;font-weight:normal;transform:scaleY(0.954);transform-origin:0 8.00px">10.33 hr</div>
<div class="a" style="left:226.30px;top:372.10px;width:6.20px;height:6.20px;background:#12b5cb;border-radius:50%"></div>
<div class="t" style="left:264.25px;top:369.00px;font-size:6.73px;color:#3a3a3a;font-weight:normal;transform:scaleY(0.950);transform-origin:0 8.00px">B16_IN_100/train</div>
<div class="t" style="left:534.05px;top:369.00px;font-size:6.70px;color:#3a3a3a;font-weight:normal;transform:scaleY(0.954);transform-origin:0 8.00px">12.466</div>
<div class="t" style="left:642.25px;top:369.00px;font-size:6.02px;color:#3a3a3a;font-weight:normal;transform:scaleY(1.062);transform-origin:0 8.00px">67</div>
<div class="t" style="left:738.65px;top:369.00px;font-size:6.84px;color:#3a3a3a;font-weight:normal;transform:scaleY(0.935);transform-origin:0 8.00px">11.25 hr</div>
<div class="a" style="left:226.30px;top:384.30px;width:6.20px;height:6.20px;background:#f9ab00;border-radius:50%"></div>
<div class="t" style="left:264.25px;top:381.00px;font-size:6.55px;color:#3a3a3a;font-weight:normal;transform:scaleY(0.976);transform-origin:0 8.00px">B16_IN_200_DS_1/train</div>
<div class="t" style="left:534.05px;top:381.00px;font-size:6.81px;color:#3a3a3a;font-weight:normal;transform:scaleY(0.940);transform-origin:0 8.00px">12.4118</div>
<div class="t" style="left:642.25px;top:381.00px;font-size:6.02px;color:#3a3a3a;font-weight:normal;transform:scaleY(1.062);transform-origin:0 8.00px">46</div>
<div class="t" style="left:738.65px;top:381.00px;font-size:6.57px;color:#3a3a3a;font-weight:normal;transform:scaleY(0.974);transform-origin:0 8.00px">7.905 hr</div>
<div class="a" style="left:226.30px;top:396.50px;width:6.20px;height:6.20px;background:#425066;border-radius:50%"></div>
<div class="t" style="left:264.25px;top:393.00px;font-size:6.55px;color:#3a3a3a;font-weight:normal;transform:scaleY(0.976);transform-origin:0 8.00px">B16_IN_400_DS_1/train</div>
<div class="t" style="left:534.05px;top:393.00px;font-size:6.81px;color:#3a3a3a;font-weight:normal;transform:scaleY(0.940);transform-origin:0 8.00px">12.2943</div>
<div class="t" style="left:642.25px;top:393.00px;font-size:6.02px;color:#3a3a3a;font-weight:normal;transform:scaleY(1.062);transform-origin:0 8.00px">37</div>
<div class="t" style="left:738.65px;top:393.00px;font-size:6.57px;color:#3a3a3a;font-weight:normal;transform:scaleY(0.974);transform-origin:0 8.00px">6.336 hr</div>
<div class="a" style="left:226.30px;top:408.70px;width:6.20px;height:6.20px;background:#e52592;border-radius:50%"></div>
<div class="t" style="left:264.25px;top:406.00px;font-size:6.54px;color:#3a3a3a;font-weight:normal;transform:scaleY(0.977);transform-origin:0 8.00px">B16_IN_50_DS_4/train</div>
<div class="t" style="left:534.05px;top:406.00px;font-size:6.81px;color:#3a3a3a;font-weight:normal;transform:scaleY(0.940);transform-origin:0 8.00px">12.5923</div>
<div class="t" style="left:642.25px;top:406.00px;font-size:6.02px;color:#3a3a3a;font-weight:normal;transform:scaleY(1.062);transform-origin:0 8.00px">97</div>
<div class="t" style="left:738.65px;top:406.00px;font-size:6.70px;color:#3a3a3a;font-weight:normal;transform:scaleY(0.954);transform-origin:0 8.00px">16.74 hr</div>
<svg class="a" style="left:542.25px;top:423.15px;width:9.50px;height:9.50px" viewBox="0 0 24 24"><path fill="#444" d="M12 8l-6 6 1.41 1.41L12 10.83l4.59 4.58L18 14z"/></svg>
<div class="a" style="left:205.80px;top:448.80px;width:682.80px;height:43.20px;background:#fff;box-shadow:0 1px 1.5px rgba(0,0,0,.16)"></div>
<div class="a" style="left:205.80px;top:469.00px;width:682.80px;height:1.00px;background:#eceeef"></div>
<div class="t" style="left:215.05px;top:454.00px;font-size:6.80px;color:#3a3a3a;font-weight:bold;transform:scaleY(1.035);transform-origin:0 8.00px">gradients</div>
<div class="t" style="left:215.05px;top:475.00px;font-size:6.80px;color:#3a3a3a;font-weight:bold;transform:scaleY(1.035);transform-origin:0 8.00px">params</div>
<div class="t" style="left:250.15px;top:454.00px;font-size:6.08px;color:#777;font-weight:normal;transform:scaleY(0.980);transform-origin:0 8.00px">145 cards</div>
<div class="t" style="left:244.05px;top:475.00px;font-size:6.08px;color:#777;font-weight:normal;transform:scaleY(0.980);transform-origin:0 8.00px">145 cards</div>
<svg class="a" style="left:867.60px;top:452.80px;width:12.00px;height:12.00px" viewBox="0 0 24 24"><path fill="#5f5f5f" d="M16.59 8.59L12 13.17 7.41 8.59 6 10l6 6 6-6z"/></svg>
<svg class="a" style="left:867.60px;top:474.60px;width:12.00px;height:12.00px" viewBox="0 0 24 24"><path fill="#5f5f5f" d="M16.59 8.59L12 13.17 7.41 8.59 6 10l6 6 6-6z"/></svg>
<div class="a" style="left:888.60px;top:60.60px;width:125.60px;height:440.40px;background:#fff"></div>
<div class="a" style="left:888.20px;top:60.60px;width:0.80px;height:440.40px;background:#e3e5e6"></div>
<div class="t" style="left:897.65px;top:66.00px;font-size:9.41px;color:#3a3a3a;font-weight:normal;transform:scaleY(0.973);transform-origin:0 9.00px">Settings</div>
<svg class="a" style="left:988.70px;top:65.80px;width:12.00px;height:12.00px" viewBox="0 0 24 24"><path fill="#222" d="M19 6.41L17.59 5 12 10.59 6.41 5 5 6.41 10.59 12 5 17.59 6.41 19 12 13.41 17.59 19 19 17.59 13.41 12z"/></svg>
<div class="a" style="left:889.00px;top:83.00px;width:125.20px;height:1.00px;background:#eceeef"></div>
<div class="t" style="left:897.75px;top:91.00px;font-size:5.87px;color:#404040;font-weight:bold;transform:scaleY(1.065);transform-origin:0 8.00px">GENERAL</div>
<div class="t" style="left:897.75px;top:104.00px;font-size:6.37px;color:#6e6e6e;font-weight:normal">Horizontal Axis</div>
<div class="a" style="left:897.20px;top:118.30px;width:107.90px;height:14.00px;border:0.9px solid #c4c7c9;border-radius:2px"></div>
<svg class="a" style="left:993.15px;top:119.95px;width:11.50px;height:11.50px" viewBox="0 0 24 24"><path fill="#555" d="M7 10l5 5 5-5z"/></svg>
<div class="t" style="left:901.15px;top:120.00px;font-size:6.17px;color:#2a2a2a;font-weight:normal;transform:scaleY(1.059);transform-origin:0 8.00px">Step</div>
<div class="a" style="left:897.20px;top:139.00px;width:9.60px;height:9.30px;background:#ffa000;border-radius:1px"></div>
<svg class="a" style="left:897.20px;top:139.05px;width:9.60px;height:9.60px" viewBox="0 0 24 24"><path fill="#1a1a1a" d="M9 16.17L4.830 12l-1.42 1.41L9 19 21 7l-1.41-1.41z"/></svg>
<div class="t" style="left:912.95px;top:138.00px;font-size:6.46px;color:#5a5a5a;font-weight:normal;transform:scaleY(1.080);transform-origin:0 8.00px;width:101.30px;overflow:hidden">Enable step selection and data table</div>
<div class="t" style="left:912.55px;top:152.00px;font-size:6.22px;color:#5a5a5a;font-weight:normal;transform:scaleY(1.099);transform-origin:0 8.00px">(Scalars only)</div>
<div class="a" style="left:912.00px;top:167.40px;width:9.50px;height:9.80px;border:1.15px solid #737373;border-radius:1px"></div>
<div class="t" style="left:927.85px;top:167.00px;font-size:6.13px;color:#5a5a5a;font-weight:normal;transform:scaleY(1.114);transform-origin:0 8.00px">Enable Range Selection</div>
<div class="a" style="left:912.00px;top:188.90px;width:9.50px;height:9.70px;border:1.15px solid #737373;border-radius:1px"></div>
<div class="t" style="left:927.85px;top:188.00px;font-size:6.31px;color:#5a5a5a;font-weight:normal;transform:scaleY(1.082);transform-origin:0 8.00px">Link by step 41253</div>
<div class="t" style="left:897.35px;top:209.00px;font-size:6.20px;color:#6e6e6e;font-weight:normal;transform:scaleY(1.032);transform-origin:0 8.00px">Card Width</div>
<div class="a" style="left:897.30px;top:229.20px;width:83.20px;height:0.80px;background:#fcd9b8"></div>
<div class="a" style="left:893.90px;top:226.20px;width:6.80px;height:6.80px;background:#f57c00;border-radius:50%"></div>
<svg class="a" style="left:989.00px;top:223.40px;width:12.60px;height:12.60px" viewBox="0 0 24 24"><path fill="#444" d="M14 12c0-1.1-.9-2-2-2s-2 .9-2 2 .9 2 2 2 2-.9 2-2zm-2-9c-4.97 0-9 4.03-9 9H0l4 4 4-4H5c0-3.870 3.13-7 7-7s7 3.13 7 7-3.13 7-7 7c-1.51 0-2.91-.49-4.06-1.3l-1.42 1.44C8.04 20.3 9.94 21 12 21c4.97 0 9-4.03 9-9s-4.03-9-9-9z"/></svg>
<div class="a" style="left:889.00px;top:244.50px;width:125.20px;height:1.00px;background:#eef3f6"></div>
<div class="t" style="left:897.35px;top:253.00px;font-size:6.21px;color:#404040;font-weight:bold;transform:scaleY(1.147);transform-origin:0 8.00px">SCALARS</div>
<div class="t" style="left:897.55px;top:267.00px;font-size:6.30px;color:#6e6e6e;font-weight:normal;transform:scaleY(1.016);transform-origin:0 8.00px">Smoothing</div>
<div class="a" style="left:897.50px;top:288.10px;width:65.40px;height:0.80px;background:#fcd9b8"></div>
<div class="a" style="left:894.10px;top:285.10px;width:6.80px;height:6.80px;background:#f57c00;border-radius:50%"></div>
<div class="a" style="left:969.70px;top:281.10px;width:36.00px;height:14.30px;border:0.9px solid #c4c7c9;border-radius:1.5px"></div>
<div class="t" style="left:972.95px;top:283.00px;font-size:5.75px;color:#444;font-weight:normal;transform:scaleY(1.162);transform-origin:0 8.00px">0</div>
<div class="t" style="left:897.55px;top:300.00px;font-size:6.55px;color:#6e6e6e;font-weight:normal;transform:scaleY(0.954);transform-origin:0 8.00px">Tooltip sorting method</div>
<div class="a" style="left:897.50px;top:313.90px;width:108.00px;height:14.20px;border:0.9px solid #c4c7c9;border-radius:2px"></div>
<svg class="a" style="left:993.15px;top:315.65px;width:11.50px;height:11.50px" viewBox="0 0 24 24"><path fill="#555" d="M7 10l5 5 5-5z"/></svg>
<div class="t" style="left:901.35px;top:315.00px;font-size:6.74px;color:#2a2a2a;font-weight:normal;transform:scaleY(0.906);transform-origin:0 8.00px">Alphabetical</div>
<div class="a" style="left:897.30px;top:334.70px;width:9.50px;height:9.20px;border:1.15px solid #737373;border-radius:1px"></div>
<div class="t" style="left:913.05px;top:334.00px;font-size:6.39px;color:#5a5a5a;font-weight:normal;transform:scaleY(0.978);transform-origin:0 8.00px">Ignore outliers in chart scaling</div>
<div class="a" style="left:897.30px;top:356.00px;width:9.50px;height:9.20px;border:1.15px solid #737373;border-radius:1px"></div>
<div class="t" style="left:913.05px;top:355.00px;font-size:6.39px;color:#5a5a5a;font-weight:normal;transform:scaleY(1.046);transform-origin:0 8.00px">Partition non-monotonic X axis</div>
<svg class="a" style="left:1002.20px;top:356.40px;width:8.60px;height:8.60px" viewBox="0 0 24 24"><path fill="#555" d="M11 18h2v-2h-2v2zm1-16C6.48 2 2 6.48 2 12s4.48 10 10 10 10-4.48 10-10S17.52 2 12 2zm0 18c-4.41 0-8-3.59-8-8s3.59-8 8-8 8 3.59 8 8-3.59 8-8 8zm0-14c-2.21 0-4 1.79-4 4h2c0-1.1.9-2 2-2s2 .9 2 2c0 2-3 1.75-3 5h2c0-2.25 3-2.5 3-5 0-2.21-1.79-4-4-4z"/></svg>
<div class="a" style="left:889.00px;top:378.80px;width:125.20px;height:1.00px;background:#eef3f6"></div>
<div class="t" style="left:897.65px;top:387.00px;font-size:6.41px;color:#404040;font-weight:bold;transform:scaleY(1.044);transform-origin:0 8.00px">HISTOGRAMS</div>
<div class="t" style="left:897.65px;top:401.00px;font-size:6.16px;color:#6e6e6e;font-weight:normal;transform:scaleY(1.039);transform-origin:0 8.00px">Mode</div>
<div class="a" style="left:897.40px;top:415.00px;width:108.00px;height:14.30px;border:0.9px solid #c4c7c9;border-radius:2px"></div>
<svg class="a" style="left:993.15px;top:416.80px;width:11.50px;height:11.50px" viewBox="0 0 24 24"><path fill="#555" d="M7 10l5 5 5-5z"/></svg>
<div class="t" style="left:901.05px;top:417.00px;font-size:6.91px;color:#2a2a2a;font-weight:normal;transform:scaleY(0.863);transform-origin:0 8.00px">Offset</div>
<div class="a" style="left:889.00px;top:438.30px;width:125.20px;height:1.00px;background:#eef3f6"></div>
<div class="t" style="left:897.45px;top:446.00px;font-size:6.34px;color:#404040;font-weight:bold;transform:scaleY(1.032);transform-origin:0 8.00px">IMAGES</div>
<div class="t" style="left:897.45px;top:460.00px;font-size:6.29px;color:#6e6e6e;font-weight:normal;transform:scaleY(1.040);transform-origin:0 8.00px">Brightness</div>
<div class="a" style="left:897.40px;top:479.90px;width:41.90px;height:1.20px;background:#f57c00"></div>
<div class="a" style="left:939.30px;top:480.10px;width:41.30px;height:0.80px;background:#fcd9b8"></div>
<div class="a" style="left:935.80px;top:477.00px;width:7.00px;height:7.00px;background:#f57c00;border-radius:50%"></div>
<svg class="a" style="left:989.00px;top:474.30px;width:12.60px;height:12.60px" viewBox="0 0 24 24"><path fill="#444" d="M14 12c0-1.1-.9-2-2-2s-2 .9-2 2 .9 2 2 2 2-.9 2-2zm-2-9c-4.97 0-9 4.03-9 9H0l4 4 4-4H5c0-3.870 3.13-7 7-7s7 3.13 7 7-3.13 7-7 7c-1.51 0-2.91-.49-4.06-1.3l-1.42 1.44C8.04 20.3 9.94 21 12 21c4.97 0 9-4.03 9-9s-4.03-9-9-9z"/></svg>
<div class="t" style="left:897.45px;top:493.00px;font-size:6.32px;color:#6e6e6e;font-weight:normal;transform:scaleY(1.034);transform-origin:0 8.00px">Contrast</div>
<div class="a" style="left:1014.20px;top:60.60px;width:7.80px;height:440.40px;background:#fff"></div>
<div class="a" style="left:1015.80px;top:70.20px;width:4.50px;height:381.30px;background:#8f8f8f;border-radius:2.3px"></div>
<svg class="a" style="left:1015px;top:63px;width:6px;height:5px" viewBox="0 0 6 5"><path d="M3 0.5 L5.6 4.2 L0.4 4.2z" fill="#9a9a9a"/></svg>
<svg class="a" style="left:1015px;top:495.5px;width:6px;height:5px" viewBox="0 0 6 5"><path d="M0.4 0.8 L5.6 0.8 L3 4.5z" fill="#9a9a9a"/></svg>
<div class="a" style="left:0.00px;top:34.60px;width:1021.60px;height:2.20px;background:linear-gradient(rgba(0,0,0,.2),rgba(0,0,0,0))"></div>
<div class="a" style="left:1021.60px;top:0.00px;width:2.40px;height:501.00px;background:#161616"></div>
</body></html>
